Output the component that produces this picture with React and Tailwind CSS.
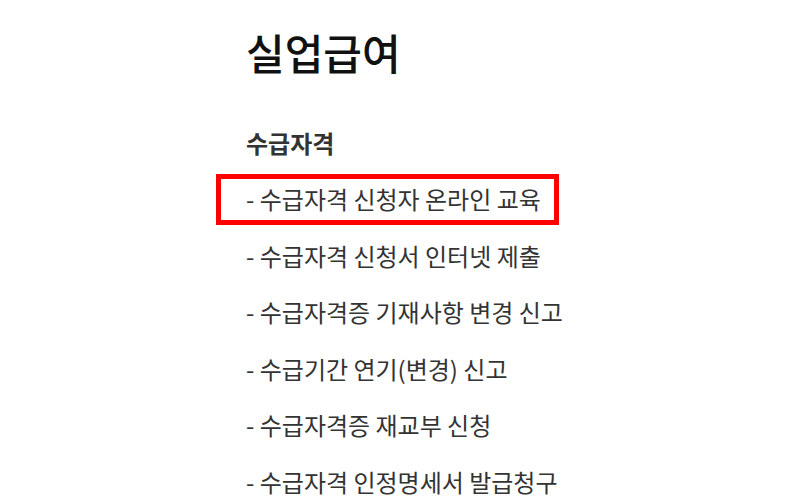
const items = [
  "수급자격 신청자 온라인 교육",
  "수급자격 신청서 인터넷 제출",
  "수급자격증 기재사항 변경 신고",
  "수급기간 연기(변경) 신고",
  "수급자격증 재교부 신청",
  "수급자격 인정명세서 발급청구",
];

export default function App() {
  return (
    <div
      className="h-[500px] w-[800px] overflow-hidden bg-white"
      style={{ fontFamily: '"Noto Sans CJK KR", "Noto Sans", sans-serif' }}
    >
      <div className="pl-[246px] pt-[24px]">
        <h1 className="text-[42px] font-medium leading-[56px] text-[#111]">
          실업급여
        </h1>
        <h2 className="mt-[46px] text-[24px] font-bold leading-[34px] text-[#333]">
          수급자격
        </h2>
        <ul className="mt-[22px] flex flex-col gap-[22.6px]">
          {items.map((item, i) => (
            <li
              key={item}
              className="relative text-[24px] leading-[34px] text-[#333]"
            >
              - {item}
              {i === 0 && (
                <span className="absolute -left-[30px] -top-[8px] h-[51px] w-[343px] border-[5px] border-[#ff0000]" />
              )}
            </li>
          ))}
        </ul>
      </div>
    </div>
  );
}
